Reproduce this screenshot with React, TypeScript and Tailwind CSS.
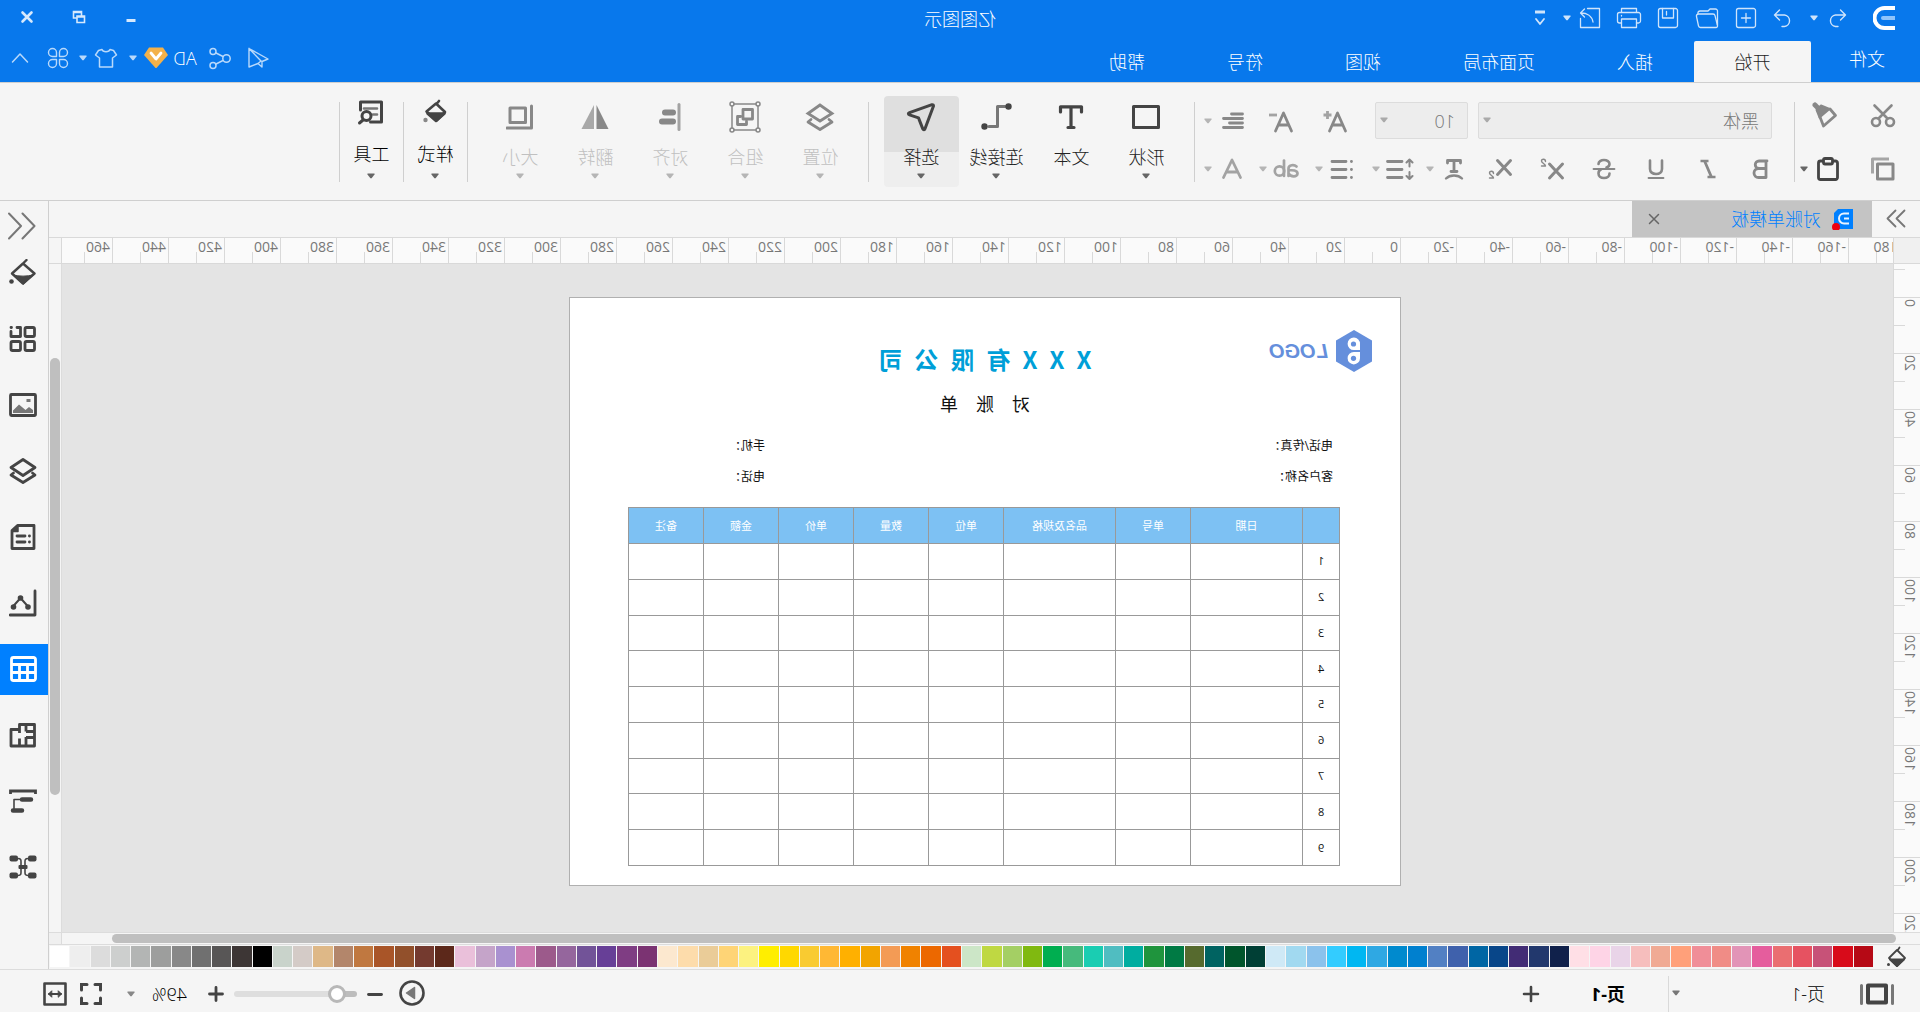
import React from "react";

type IconProps = { children: React.ReactNode; w?: number; h?: number; className?: string; sw?: number };

function Icon({ children, w = 28, h = 28, className = "", sw = 2 }: IconProps) {
  return (
    <svg
      width={w}
      height={h}
      viewBox={`0 0 ${w} ${h}`}
      fill="none"
      stroke="currentColor"
      strokeWidth={sw}
      strokeLinecap="round"
      strokeLinejoin="round"
      className={`shrink-0 ${className}`}
      aria-hidden="true"
    >
      {children}
    </svg>
  );
}

function Caret({ className = "" }: { className?: string }) {
  return (
    <svg width="8" height="6" viewBox="0 0 8 6" className={`shrink-0 ${className}`} aria-hidden="true">
      <path d="M0.5 0.5h7v1L4.6 5.2h-1.2L0.5 1.5z" fill="currentColor" />
    </svg>
  );
}

function IconButton({ label, className = "", children }: { label: string; className?: string; children: React.ReactNode }) {
  return (
    <button type="button" aria-label={label} className={`flex shrink-0 items-center justify-center ${className}`}>
      {children}
    </button>
  );
}

/* ---------- header ---------- */

const tabs = ["插入", "页面布局", "视图", "符号", "帮助"];

function Header() {
  return (
    <header className="h-[82px] shrink-0 bg-[#0878ec] text-white">
      <div className="grid h-[41px] grid-cols-[1fr_auto_1fr] items-center pb-1">
        <div className="flex items-center pb-px pl-[25px] text-[#cfe4fb]">
          <svg width="22" height="24" viewBox="0 0 22 24" fill="none" aria-label="logo">
            <path d="M0 2h10.500a10 10 0 0 1 0 20H0" stroke="#fff" strokeWidth="4" />
            <path d="M0 12h12" stroke="#8fc4fb" strokeWidth="4" strokeLinecap="round" />
          </svg>
          <IconButton label="撤销" className="ml-[19px] w-[34px]">
            <Icon w={20} h={20} sw={1.4}>
              <path d="M6.500 2L1.500 7l5 5M1.500 7h10a5.800 5.800 0 0 1 0 11.500H9" />
            </Icon>
          </IconButton>
          <IconButton label="撤销列表" className="w-3"><Caret /></IconButton>
          <IconButton label="重做" className="ml-2 w-[34px]">
            <Icon w={20} h={20} sw={1.4}>
              <path d="M13.500 2l5 5-5 5M18.500 7h-10a5.800 5.800 0 0 0 0 11.500H11" />
            </Icon>
          </IconButton>
          <div className="ml-[3px] flex items-center gap-[5px]">
            <IconButton label="新建" className="w-[34px]">
              <Icon w={22} h={22} sw={1.3}>
                <rect x="1.500" y="1.500" width="19" height="19" rx="2" />
                <path d="M11 6.500v9M6.500 11h9" />
              </Icon>
            </IconButton>
            <IconButton label="打开" className="w-[34px]">
              <Icon w={24} h={22} sw={1.3}>
                <path d="M1.500 18V4a2 2 0 0 1 2-2h5.500l2 2h8a2 2 0 0 1 2 2.500" />
                <path d="M3 20.500h15.500a2 2 0 0 0 2-1.600l2-9.400a2 2 0 0 0-2-2.500H6a2 2 0 0 0-2 1.600L1.500 18.500a1.600 1.600 0 0 0 1.500 2z" />
              </Icon>
            </IconButton>
            <IconButton label="保存" className="w-[34px]">
              <Icon w={22} h={22} sw={1.3}>
                <rect x="1.500" y="1.500" width="19" height="19" rx="2" />
                <path d="M5.500 1.500v9.500h11V1.500M12.500 4.500v3.500" />
              </Icon>
            </IconButton>
            <IconButton label="打印" className="w-[34px]">
              <Icon w={26} h={22} sw={1.3}>
                <path d="M5.500 5.500v-4h15v4M5.500 16h-2a2 2 0 0 1-2-2V7.500a2 2 0 0 1 2-2h19a2 2 0 0 1 2 2V14a2 2 0 0 1-2 2h-2" />
                <path d="M5.500 12h15v8.500h-15zM20.500 8.500v0.500" />
              </Icon>
            </IconButton>
            <IconButton label="导出" className="w-[34px]">
              <Icon w={22} h={22} sw={1.3}>
                <path d="M13.500 1.500h-12v19h19v-9" />
                <path d="M16.500 2l4 4-4 4M20 6c-6 0-11 3-12 9" />
              </Icon>
            </IconButton>
          </div>
          <IconButton label="导出列表" className="w-3"><Caret /></IconButton>
          <IconButton label="更多" className="ml-3 w-[18px]">
            <Icon w={12} h={16} sw={1.8}>
              <path d="M1 2h10" strokeWidth="3" strokeLinecap="butt" />
              <path d="M2 9l4 5 4-5" />
            </Icon>
          </IconButton>
        </div>
        <h1 className="text-lg leading-6">亿图图示</h1>
        <div className="flex items-center justify-end pb-[3px] pr-px text-[#d6e9fd]">
          <IconButton label="最小化" className="h-8 w-[52px]">
            <Icon w={14} h={14}><path d="M2.500 10.500h9" strokeWidth="3" strokeLinecap="butt" /></Icon>
          </IconButton>
          <IconButton label="还原" className="h-8 w-[52px]">
            <Icon w={14} h={14} sw={1.6}>
              <path d="M1.500 6h7.500v6.500H1.500zM4.500 5.500V1.500h8v6.500H9.500M4.500 2.500h8M1.500 7h7.500" strokeLinejoin="miter" />
            </Icon>
          </IconButton>
          <IconButton label="关闭" className="h-8 w-[52px]">
            <Icon w={14} h={14} sw={2.6}><path d="M2.500 2.500l9 9M11.500 2.500l-9 9" /></Icon>
          </IconButton>
        </div>
      </div>
      <div className="flex h-[41px] justify-between">
        <nav className="flex text-lg leading-6">
          <button type="button" className="w-[109px] pb-[6px] pr-[3px]">文件</button>
          <button type="button" className="w-[117px] rounded-t-xs bg-[#f5f5f5] text-[#222]">开始</button>
          {tabs.map((t) => (
            <button key={t} type="button" className="px-[41px]">{t}</button>
          ))}
        </nav>
        <div className="flex items-center pb-2 pr-2 text-[#b9d9fb]">
          <IconButton label="发送" className="w-6">
            <Icon w={24} h={24} sw={1.4}>
              <path d="M21 2.500L2 13l6 2.500M8 15.500V21l4-3.500M21 2.500v18.500l-9-3.500L9 15M21 2.500L9 15" />
            </Icon>
          </IconButton>
          <IconButton label="分享" className="ml-[14px] w-6">
            <Icon w={24} h={24} sw={1.5}>
              <circle cx="5.500" cy="12.500" r="3.700" />
              <circle cx="19" cy="5.500" r="3" />
              <circle cx="19" cy="19.500" r="3" />
              <path d="M9 10.500l7-3.500M9 14.500l7 3.500" />
            </Icon>
          </IconButton>
          <button type="button" className="ml-[10px] flex w-[26px] justify-center text-lg leading-6 text-white">AD</button>
          <IconButton label="会员" className="ml-1 w-6">
            <svg width="24" height="22" viewBox="0 0 24 22" aria-hidden="true">
              <path d="M5 0.500h14L24 8 12.500 21h-1L0 8z" fill="#f3b14a" />
              <path d="M7 6l5 6 5-6" fill="none" stroke="#fff" strokeWidth="2.800" strokeLinecap="round" strokeLinejoin="round" />
            </svg>
          </IconButton>
          <IconButton label="会员列表" className="ml-[6px] w-[10px]"><Caret /></IconButton>
          <IconButton label="皮肤" className="ml-[10px] w-6">
            <Icon w={24} h={24} sw={1.5}>
              <path d="M8 3.500c1 3 7 3 8 0l3.500 1L22.500 9l-4 3v9h-13v-9l-4-3 3-4.500z" />
            </Icon>
          </IconButton>
          <IconButton label="皮肤列表" className="ml-[6px] w-[10px]"><Caret /></IconButton>
          <IconButton label="应用" className="ml-2 w-6">
            <Icon w={24} h={24} sw={1.4}>
              <path d="M10.500 10.500H6.500a4 4 0 1 1 4-4zM13.500 10.500V6.500a4 4 0 1 1 4 4zM10.500 13.500V17.500a4 4 0 1 1-4-4zM13.500 13.500h4a4 4 0 1 1-4 4z" />
            </Icon>
          </IconButton>
          <IconButton label="收起" className="ml-[14px] w-6">
            <Icon w={18} h={12} sw={1.5}><path d="M1.500 10L9 2l7.500 8" /></Icon>
          </IconButton>
        </div>
      </div>
    </header>
  );
}

/* ---------- ribbon ---------- */

const Sep = ({ className = "" }: { className?: string }) => (
  <div className={`mt-[19px] h-20 w-px shrink-0 bg-[#cfcfcf] ${className}`} />
);

type ToolProps = { label: string; icon: React.ReactNode; disabled?: boolean; caret?: boolean; active?: boolean };

function Tool({ label, icon, disabled = false, caret = true, active }: ToolProps) {
  return (
    <button
      type="button"
      className={`mt-[13px] flex h-[91px] w-[75px] flex-col items-center rounded-sm ${
        disabled ? "text-[#c0c0c0]" : "text-[#222]"
      } ${active ? "bg-[linear-gradient(#dfdfdf_56px,#eeeeee_56px)]" : ""}`}
    >
      <span className={`flex h-[42px] items-center ${disabled ? "text-[#888]" : "text-[#444]"}`}>{icon}</span>
      <span className="mt-[7px] text-lg leading-6">{label}</span>
      {caret && <Caret className={`mt-1 ${disabled ? "text-[#b5b5b5]" : "text-[#666]"}`} />}
    </button>
  );
}

function SideTool({ label, icon }: { label: string; icon: React.ReactNode }) {
  return (
    <button type="button" className="mt-[13px] flex h-[91px] w-[63px] flex-col items-center text-black">
      <span className="flex h-8 items-center text-[#444]">{icon}</span>
      <span className="mt-[14px] text-lg leading-6">{label}</span>
      <Caret className="mt-[7px] text-[#666]" />
    </button>
  );
}

function Ribbon() {
  return (
    <section className="flex h-[119px] shrink-0 border-y border-[#cfcfcf] text-[#888]">
      <div className="flex w-[125px] flex-col gap-6 pl-[22px] pt-[17px]">
        <div className="flex">
          <IconButton label="剪切" className="h-[30px] w-[30px]">
            <Icon w={26} h={26} sw={2.6}>
              <circle cx="6" cy="20" r="4" />
              <circle cx="20" cy="20" r="4" />
              <path d="M8.500 16.500L21.500 3.500M17.500 16.500L4.500 3.500" />
            </Icon>
          </IconButton>
          <IconButton label="格式刷" className="ml-[28px] h-[30px] w-[30px]">
            <Icon w={26} h={26} sw={2.8}>
              <path d="M8 7L2.500 13.500 14.500 24 18 15" />
              <path d="M8.500 7l10 8.500L21.500 8 17 3.500z" fill="currentColor" strokeWidth="2" />
              <path d="M20.500 5.500l2.500-2.500" strokeWidth="5" />
            </Icon>
          </IconButton>
        </div>
        <div className="flex">
          <IconButton label="复制" className="h-[30px] w-[30px]">
            <Icon w={26} h={26} sw={3}>
              <path d="M3 8h15.500v15H3z" />
              <path d="M7 3h16.500v14.500" stroke="#a5a5a5" strokeLinecap="butt" />
            </Icon>
          </IconButton>
          <IconButton label="粘贴" className="ml-[25px] h-[30px] w-[30px] text-[#444]">
            <Icon w={24} h={26} sw={2.8}>
              <rect x="2.500" y="5" width="19" height="18.500" rx="2" />
              <rect x="7.500" y="2.500" width="9" height="5.500" rx="1.500" fill="#f5f5f5" />
            </Icon>
          </IconButton>
          <IconButton label="粘贴选项" className="ml-1 w-[10px] text-[#666]"><Caret /></IconButton>
        </div>
      </div>
      <Sep />
      <div className="ml-[22px] w-[577px] pt-[19px]">
        <div className="flex h-[37px] items-center">
          <div className="relative w-[294px]">
            <select aria-label="字体" className="h-[37px] w-full appearance-none rounded-xs border border-[#dcdcdc] bg-[#ededed] pl-3 text-lg text-[#777]">
              <option>黑体</option>
            </select>
            <Caret className="pointer-events-none absolute right-[5px] top-[15px] text-[#aaa]" />
          </div>
          <div className="relative ml-[10px] w-[93px]">
            <select aria-label="字号" className="h-[37px] w-full appearance-none rounded-xs border border-[#dcdcdc] bg-[#ededed] pl-3 text-lg text-[#777]">
              <option>10</option>
            </select>
            <Caret className="pointer-events-none absolute right-[5px] top-[15px] text-[#aaa]" />
          </div>
          <IconButton label="增大字号" className="ml-[23px] h-[30px] w-[34px]">
            <Icon w={26} h={24} sw={2.8}>
              <path d="M2.500 22L10.500 4l8 18M5.500 16h10" />
              <path d="M20.500 2v8M16.500 6h8" stroke="#a3a3a3" strokeLinecap="butt" />
            </Icon>
          </IconButton>
          <IconButton label="减小字号" className="ml-5 h-[30px] w-[34px]">
            <Icon w={26} h={24} sw={2.8}>
              <path d="M2.500 22L10.500 4l8 18M5.500 16h10" />
              <path d="M17 6h8" stroke="#a3a3a3" strokeLinecap="butt" />
            </Icon>
          </IconButton>
          <IconButton label="对齐方式" className="ml-4 h-[30px] w-[30px]">
            <Icon w={24} h={20} sw={2.8}>
              <path d="M2.500 3h11M2.500 7.500h19M2.500 12h13M2.500 16.500h19" />
            </Icon>
          </IconButton>
          <IconButton label="对齐列表" className="ml-[3px] w-[14px] text-[#b5b5b5]"><Caret /></IconButton>
        </div>
        <div className="mt-[15px] flex items-center">
          <div className="-ml-[3px] flex gap-[22px]">
            <IconButton label="加粗" className="h-[30px] w-[30px]">
              <Icon w={18} h={22} sw={2.8}>
                <path d="M3 3v16.500h7.500a4.500 4.500 0 0 0 0-9H3.500M10 10.500a3.700 3.700 0 0 0 0-7.500H2" />
              </Icon>
            </IconButton>
            <IconButton label="斜体" className="h-[30px] w-[30px]">
              <Icon w={18} h={22} sw={2.8}>
                <path d="M8.500 3h8M1.500 19h8" strokeWidth="2.400" strokeLinecap="butt" />
                <path d="M12 4L6 18" />
              </Icon>
            </IconButton>
            <IconButton label="下划线" className="h-[30px] w-[30px]">
              <Icon w={18} h={22} sw={2.6}>
                <path d="M3 2.500v8.500c0 3 2.500 5 6 5s6-2 6-5V2.500" />
                <path d="M1.500 20h15" strokeWidth="1.800" />
              </Icon>
            </IconButton>
            <IconButton label="删除线" className="h-[30px] w-[30px]">
              <Icon w={24} h={22} sw={2.6}>
                <path d="M17.500 6c0-2.500-2.500-4-5.500-4S6.500 3.500 6.500 6c0 2 1.500 3 3 3.500M6.500 15.500c0 2.500 2 4.500 5.500 4.500s5.500-2 5.500-4.500-1-3.500-2.500-4" />
                <path d="M1.500 11h21" strokeWidth="1.800" />
              </Icon>
            </IconButton>
            <IconButton label="上标" className="h-[30px] w-[30px]">
              <Icon w={26} h={24} sw={3}>
                <path d="M2.500 7l13 14M15.500 7l-13 14" />
                <path d="M19.500 4.500c0-3 4-3 4-0.500 0 2-4 3-4 5h4" strokeWidth="1.400" />
              </Icon>
            </IconButton>
            <IconButton label="下标" className="h-[30px] w-[30px]">
              <Icon w={26} h={24} sw={3}>
                <path d="M2.500 3.500l13 14M15.500 3.500l-13 14" />
                <path d="M19.500 16.500c0-3 4-3 4-0.500 0 2-4 3-4 5h4" strokeWidth="1.400" />
              </Icon>
            </IconButton>
          </div>
          <IconButton label="文字方向" className="ml-4 h-[30px] w-[30px]">
            <Icon w={20} h={24} sw={2.8}>
              <path d="M3.500 6V3.500h13V6M10 4v10.500M7 14.500h6" />
              <path d="M2 21.500c4-4 12-4 16 0" strokeWidth="2.400" />
            </Icon>
          </IconButton>
          <IconButton label="文字方向列表" className="ml-[2px] w-[14px] text-[#b5b5b5]"><Caret /></IconButton>
          <IconButton label="行距" className="ml-2 h-[30px] w-[30px]">
            <Icon w={30} h={22} sw={2.8}>
              <path d="M13 3.500h14.500M13 11.500h14.500M13 19.500h14.500" />
              <path d="M5.500 1.500v7M2.500 4.500l3-3 3 3M5.500 21v-7M2.500 18l3 3 3-3" strokeWidth="2" />
            </Icon>
          </IconButton>
          <IconButton label="行距列表" className="ml-[2px] w-[14px] text-[#b5b5b5]"><Caret /></IconButton>
          <IconButton label="项目符号" className="ml-3 h-[30px] w-[30px]">
            <Icon w={26} h={22} sw={2.8}>
              <path d="M9 3.500h14M9 11.500h14M9 19.500h14M3.500 3.500h0.100M3.500 11.500h0.100M3.500 19.500h0.100" />
            </Icon>
          </IconButton>
          <IconButton label="项目符号列表" className="ml-px w-[14px] text-[#b5b5b5]"><Caret /></IconButton>
          <IconButton label="突出显示" className="ml-[11px] h-[30px] w-[30px] text-[#a3a3a3]">
            <Icon w={28} h={22} sw={2.7}>
              <path d="M3.500 8.500c2-2 8-2 8 2V18M11.500 12c-4 0-9 0-9 3.500 0 4 7 3.500 9 0" />
              <path d="M16 2.500V18" />
              <circle cx="20.500" cy="13" r="4.700" />
            </Icon>
          </IconButton>
          <IconButton label="突出显示列表" className="ml-px w-[14px] text-[#b5b5b5]"><Caret /></IconButton>
          <IconButton label="字体颜色" className="ml-[9px] h-[30px] w-[30px] text-[#a3a3a3]">
            <Icon w={22} h={22} sw={2.8}>
              <path d="M2.500 19.500L11 2l8.500 17.500M5.500 14h11" />
            </Icon>
          </IconButton>
          <IconButton label="字体颜色列表" className="ml-[2px] w-[14px] text-[#b5b5b5]"><Caret /></IconButton>
        </div>
      </div>
      <Sep />
      <div className="ml-[10px] flex">
        <Tool label="形状" icon={<Icon w={30} h={28} sw={3}><path d="M2.500 3.500h25v21h-25z" /></Icon>} />
        <Tool
          label="文本"
          caret={false}
          icon={<Icon w={28} h={28} sw={3.2}><path d="M3.500 9V3.800h21V9M14 4v20.500M11 24.500h6" /></Icon>}
        />
        <Tool
          label="连接线"
          icon={
            <Icon w={32} h={28}>
              <path d="M7 3.500h7.500v20H23" stroke="#777" strokeWidth="3" />
              <circle cx="3.500" cy="3.500" r="3.200" fill="currentColor" stroke="none" />
              <circle cx="27.500" cy="23.500" r="3.200" fill="currentColor" stroke="none" />
            </Icon>
          }
        />
        <Tool
          label="选择"
          active
          icon={
            <Icon w={30} h={30} sw={3}>
              <path d="M2.500 4c0-1 0.500-1.500 1.500-1.300l22.500 8c1.500 0.600 1.500 1.700 0 2.200l-9 3-4.300 11c-0.600 1.300-1.700 1.200-2.200-0.200z" />
            </Icon>
          }
        />
      </div>
      <Sep className="ml-[15px]" />
      <div className="ml-[10px] flex">
        <Tool
          label="位置"
          disabled
          icon={
            <Icon w={30} h={30} sw={2.8}>
              <path d="M15 3l12 8.500L15 19 3 11.500z" strokeLinejoin="miter" />
              <path d="M6 17.500l-3 2.500 12 7.500L27 20l-3-2.500" />
            </Icon>
          }
        />
        <Tool
          label="组合"
          disabled
          icon={
            <Icon w={32} h={32} sw={1.5}>
              <path d="M5 3h22M5 29h22M3 5v22M29 5v22" />
              <circle cx="3" cy="3" r="2" />
              <circle cx="29" cy="3" r="2" />
              <circle cx="3" cy="29" r="2" />
              <circle cx="29" cy="29" r="2" />
              <path d="M8.500 8.500h9.500v9.500H8.500zM20.500 15.500h3v8h-9v-3" strokeWidth="2.800" />
            </Icon>
          }
        />
        <Tool
          label="对齐"
          disabled
          icon={
            <Icon w={30} h={30} sw={3}>
              <path d="M6 2.500v25" stroke="#a3a3a3" />
              <path d="M12 10.500h8M12 19.500h11" strokeWidth="6" />
            </Icon>
          }
        />
        <Tool
          label="翻转"
          disabled
          icon={
            <Icon w={30} h={28} className="stroke-none">
              <path d="M13.500 2v24H1.500z" fill="#888" />
              <path d="M16 2v24h12.500z" fill="#a8a8a8" />
            </Icon>
          }
        />
        <Tool
          label="大小"
          disabled
          icon={
            <Icon w={28} h={28} sw={3}>
              <path d="M8.500 5h15.500v14.500H8.500z" />
              <path d="M2.500 3v22H27" />
            </Icon>
          }
        />
      </div>
      <Sep className="ml-[15px]" />
      <SideTool
        label="样式"
        icon={
          <Icon w={26} h={26} sw={2.6}>
            <path d="M9 2l2.500 3M12 4.500L3 13l8.500 8.500L21.500 12.500z" />
            <path d="M3.500 14.500h17L12 22z" fill="currentColor" />
            <circle cx="22.500" cy="21" r="2.200" fill="#888" stroke="none" />
          </Icon>
        }
      />
      <Sep />
      <SideTool
        label="工具"
        icon={
          <Icon w={28} h={28} sw={3}>
            <path d="M24.500 12V4h-21v20h11" />
            <path d="M8 10.500h13M8 16.500h4" stroke="#777" strokeWidth="2.600" />
            <circle cx="18.500" cy="18" r="4.500" />
            <path d="M22 22l3.500 3" />
          </Icon>
        }
      />
      <Sep />
    </section>
  );
}

/* ---------- workspace ---------- */

const hTicks = Array.from({ length: 33 }, (_, i) => -180 + i * 20);
const vTicks = Array.from({ length: 13 }, (_, i) => -20 + i * 20);

function HorizontalRuler() {
  return (
    <div className="flex h-[27px] border-y border-[#d9d9d9]">
      <div className="w-[27px] shrink-0 border-r border-[#d9d9d9] bg-[#f0f0f0]" />
      <div className="flex min-w-0 flex-1 overflow-x-clip bg-[#fafafa] text-sm font-normal leading-[14px] text-[#777]">
        {hTicks.map((n, i) => (
          <div key={n} className={`flex w-14 shrink-0 flex-col justify-between border-l border-[#d9d9d9] pt-[2px] ${i === 0 ? "-ml-3" : ""}`}>
            <span className="h-3 pl-[2px]">{n}</span>
            <span className="ml-[27px] h-[11px] w-px bg-[#d9d9d9]" />
          </div>
        ))}
      </div>
      <div className="w-[13px] shrink-0 border-l border-[#d9d9d9]" />
    </div>
  );
}

function VerticalRuler() {
  return (
    <div className="w-[27px] shrink-0 overflow-y-clip border-r border-[#d9d9d9] bg-[#fafafa] text-sm font-normal leading-[14px] text-[#777]">
      {vTicks.map((n, i) => (
        <div key={n} className={`flex h-14 justify-between border-t border-[#d9d9d9] ${i === 0 ? "-mt-[23px]" : ""}`}>
          <span className="flex w-[14px] pl-[3px] pt-px">
            {i > 0 && <span className="h-max rotate-180 [writing-mode:vertical-rl]">{n}</span>}
          </span>
          <span className="mt-[27px] h-px w-[11px] bg-[#d9d9d9]" />
        </div>
      ))}
    </div>
  );
}

const columns = [
  { name: "", w: "w-[37px]" },
  { name: "日期", w: "w-[112px]" },
  { name: "单号", w: "w-[75px]" },
  { name: "品名及规格", w: "w-[112px]" },
  { name: "单位", w: "w-[75px]" },
  { name: "数量", w: "w-[75px]" },
  { name: "单价", w: "w-[75px]" },
  { name: "金额", w: "w-[75px]" },
  { name: "备注", w: "w-[75px]" },
];

function Sheet() {
  return (
    <article className="ml-[492px] mt-[33px] h-[589px] w-[832px] shrink-0 border border-[#b0b0b0] bg-white font-normal text-[#111]">
      <div className="flex items-center gap-2 pl-[28px] pt-8 text-[#658fdc]">
        <svg width="36" height="42" viewBox="0 0 36 42" className="shrink-0" aria-hidden="true">
          <path d="M18 0l18 10.500v21L18 42 0 31.500v-21z" fill="currentColor" />
          <path d="M12 20V14a6.200 6.200 0 1 1 6.200 6zM12 22h6.200a6.200 6.200 0 1 1-6.200 6.200z" fill="#fff" />
          <circle cx="18.500" cy="14" r="2.600" fill="currentColor" />
          <circle cx="18.500" cy="28.300" r="2.600" fill="currentColor" />
        </svg>
        <span className="font-['Liberation_Sans',sans-serif] text-xl font-bold italic leading-5">LOGO</span>
      </div>
      <h2 className="-mt-[29px] text-center font-['Noto_Sans_CJK_SC',sans-serif] text-2xl font-bold leading-8 text-[#009fd8]">
        {"X\u2002X\u2002X\u2002有\u2002限\u2002公\u2002司"}
      </h2>
      <h3 className="mt-[17px] text-center text-lg leading-6">{"对\u2003账\u2003单"}</h3>
      <div className="mt-5 grid grid-cols-[568px_1fr] gap-y-[11px] pl-[67px] text-xs leading-5">
        <span>电话/传真：</span>
        <span>手机：</span>
        <span>客户名称：</span>
        <span>电话：</span>
      </div>
      <table className="ml-[60px] mt-5 h-[359px] w-[710px] table-fixed border-collapse text-center text-[11px] leading-4">
        <thead>
          <tr className="h-9 bg-[#7dc1f3] text-white">
            {columns.map((c) => (
              <th key={c.name || "no"} className={`${c.w} border border-[#999] p-0 font-normal`}>{c.name}</th>
            ))}
          </tr>
        </thead>
        <tbody>
          {Array.from({ length: 9 }, (_, r) => (
            <tr key={r} className="h-[35px]">
              {columns.map((c, i) => (
                <td key={i} className="border border-[#999] p-0">{i === 0 ? r + 1 : ""}</td>
              ))}
            </tr>
          ))}
        </tbody>
      </table>
    </article>
  );
}

const swatches = [
  "#b60915", "#d80b1a", "#c75278", "#e65261", "#ea6e71", "#e55d9d", "#e294b7", "#f08c86", "#f08e98", "#ffa07a",
  "#f0aa94", "#f6bebd", "#e9d4e8", "#fed4e6", "#ffdfe6", "#10214b", "#22386d", "#422c75", "#084689", "#0066a4",
  "#3f61ac", "#5280c3", "#0080cf", "#008ace", "#2fa8e3", "#00b7f2", "#33ccff", "#8bc2ec", "#a1d9f0", "#cfe9f6",
  "#003f35", "#00552c", "#006361", "#566a2e", "#007a44", "#1f943d", "#00ada0", "#50bdc1", "#1acdb2", "#46ba7c",
  "#00ae50", "#80b910", "#a4cf64", "#bfd842", "#cce6c7", "#e4501f", "#ec6800", "#f08200", "#f39b55", "#f2a400",
  "#ffb000", "#ffb834", "#f9cb31", "#ffd800", "#ffee00", "#fcf280", "#fed476", "#eacc98", "#fddcab", "#fce8cf",
  "#7b3372", "#7f3d83", "#673f97", "#725398", "#95669d", "#9c5a8b", "#cb7bb0", "#a991d0", "#c5a4c9", "#eac0da",
  "#5c281a", "#743a2f", "#92502b", "#a95528", "#c07840", "#b3866b", "#deb887", "#d4cbc7", "#c9d3cb", "#000000",
  "#3d3635", "#585656", "#707070", "#888888", "#9d9e9d", "#b3b5b4", "#cdcfce", "#dcdcdc", "#eeeeee", "#ffffff",
];

function Workspace() {
  return (
    <main className="flex min-w-0 flex-1 flex-col">
      <div className="flex h-9 shrink-0 items-center">
        <IconButton label="展开标签" className="w-12 text-[#777]">
          <Icon w={22} h={20} sw={1.8}><path d="M2.500 1.500l8 8-8 8M11.500 1.500l8 8-8 8" /></Icon>
        </IconButton>
        <div className="flex h-full w-60 items-center bg-[#c4c4c4] pl-[18px] text-[#0080ff]">
          <svg width="22" height="22" viewBox="0 0 22 22" aria-hidden="true">
            <path d="M1 1h15l4 4v15a1 1 0 0 1-1 1H1z" fill="#0080ff" />
            <path d="M5 5.500h5a5 5 0 0 1 0 10H5M5 10.500h5" fill="none" stroke="#e8f2ff" strokeWidth="2" />
            <circle cx="18" cy="19" r="4" fill="#f00010" />
          </svg>
          <span className="ml-[11px] text-lg leading-6">对账单模板</span>
          <IconButton label="关闭标签" className="ml-auto mr-[10px] h-6 w-6 text-[#666]">
            <Icon w={12} h={12} sw={1.5}><path d="M1.500 1.500l9 9M10.500 1.500l-9 9" /></Icon>
          </IconButton>
        </div>
      </div>
      <HorizontalRuler />
      <div className="flex min-h-0 flex-1">
        <VerticalRuler />
        <div className="min-w-0 flex-1 overflow-hidden bg-[#e4e4e4]"><Sheet /></div>
        <div className="w-[13px] shrink-0 border-l border-[#dcdcdc] px-px pt-[94px]">
          <div className="h-[437px] rounded-full bg-[#bfbfbf]" />
        </div>
      </div>
      <div className="flex h-[13px] shrink-0 border-y border-[#dcdcdc]">
        <div className="flex-1 border-r border-[#dcdcdc] pl-6 pr-[50px] pt-px">
          <div className="h-[9px] rounded-full bg-[#bfbfbf]" />
        </div>
        <div className="w-3 shrink-0 bg-[#f0f0f0]" />
      </div>
      <div className="flex h-6 shrink-0 items-center pb-px pr-px">
        <IconButton label="填充颜色" className="w-[47px] pr-[2px] text-[#444]">
          <Icon w={22} h={22} sw={1.8}>
            <path d="M8.500 1.500l2 3M11 4L3 12l8 8 8-8z" />
            <path d="M4 13.500h14L11 20z" fill="currentColor" />
            <circle cx="19.500" cy="18.500" r="1.500" fill="currentColor" stroke="none" />
          </Icon>
        </IconButton>
        <div className="grid h-[21px] flex-1 auto-cols-fr grid-flow-col gap-px">
          {swatches.map((c) => (
            <button key={c} type="button" aria-label={c} style={{ backgroundColor: c }} />
          ))}
        </div>
      </div>
    </main>
  );
}

/* ---------- side bar ---------- */

const sideItems: { label: string; icon: React.ReactNode }[] = [
  {
    label: "填充",
    icon: (
      <>
        <path d="M10.500 1l3.500 3.500L2.500 14.500 14 24.500l11-10L14 4.500" strokeWidth="2.400" />
        <path d="M4 16c6 1.500 14 1.500 20 0l-10 9z" fill="currentColor" strokeWidth="1" />
        <circle cx="25.500" cy="22.500" r="2.300" fill="currentColor" stroke="none" />
      </>
    ),
  },
  {
    label: "符号库",
    icon: (
      <>
        <rect x="2.500" y="2.500" width="9.500" height="9" rx="1.500" />
        <rect x="2.500" y="16.500" width="9.500" height="9" rx="1.500" />
        <rect x="16.500" y="16.500" width="9.500" height="9" rx="1.500" />
        <path d="M20 2.500h-3.500v9H26V6.500M25.500 2.500h0.500" />
      </>
    ),
  },
  {
    label: "图片",
    icon: (
      <>
        <rect x="1.500" y="3.500" width="25" height="21" rx="1" />
        <path d="M4 22v-3l4-3 3.500 3L18 13.500l6 6V22z" fill="#777" stroke="none" />
        <rect x="6.500" y="8" width="4" height="3" fill="#777" stroke="none" />
      </>
    ),
  },
  {
    label: "图层",
    icon: (
      <>
        <path d="M14 2.500L26 10.500 14 18.500 2 10.500z" />
        <path d="M4.500 16L2 18l12 7.500L26 18l-2.500-2" />
      </>
    ),
  },
  {
    label: "页面",
    icon: (
      <>
        <path d="M3 2.500h16.500l5.500 5v18H3z" />
        <path d="M19 3v5.500h5.500z" fill="currentColor" strokeWidth="1.500" />
        <path d="M12 13h8M12 19h8M7.500 13h0.100M7.500 19h0.100" />
      </>
    ),
  },
  {
    label: "图表",
    icon: (
      <>
        <path d="M2 2v24h25" />
        <path d="M9 17.500L16.500 9 24 17.500" strokeWidth="2" />
        <circle cx="9" cy="18" r="2.800" fill="currentColor" stroke="none" />
        <circle cx="16.500" cy="9" r="2.800" fill="currentColor" stroke="none" />
        <circle cx="23.500" cy="18" r="2.800" fill="currentColor" stroke="none" />
      </>
    ),
  },
  {
    label: "表格",
    icon: (
      <>
        <rect x="1.500" y="2.500" width="24" height="23" rx="2" />
        <path d="M2 9.500h23M2 17.500h23M9.500 10v15M17.500 10v15" strokeLinecap="butt" />
      </>
    ),
  },
  {
    label: "平面图",
    icon: (
      <path
        d="M17.500 12V3.500h-15v21.500h23.500V8.500h-8M11 3.500v7M2.500 10.500h8.500M2.500 16.500h8.500M11 16v9M17.500 17.500v7.500"
        strokeLinecap="butt"
      />
    ),
  },
  {
    label: "甘特图",
    icon: (
      <>
        <path d="M1.500 7V4h25v3" strokeLinecap="butt" strokeLinejoin="miter" />
        <path d="M6 12.500h9M15 23.500h9" strokeWidth="4.500" />
        <path d="M15 12.500h8v9" strokeWidth="1.600" />
      </>
    ),
  },
  {
    label: "思维导图",
    icon: (
      <>
        <g fill="currentColor" stroke="none">
          <rect x="0.500" y="2.500" width="8.500" height="6" rx="2" />
          <rect x="0.500" y="19.500" width="8.500" height="6" rx="2" />
          <rect x="19" y="2.500" width="8.500" height="6" rx="2" />
          <rect x="19" y="19.500" width="8.500" height="6" rx="2" />
          <rect x="9.500" y="12" width="9" height="4" rx="1" />
        </g>
        <path d="M9 5.500c3.500 0 3 2 3 4.500v8c0 2.500 0.500 4.500-3 4.500M19 5.500c-3.500 0-3 2-3 4.500v8c0 2.500-0.500 4.500 3 4.500" strokeWidth="1.600" />
      </>
    ),
  },
];

function SideBar() {
  return (
    <aside className="flex w-[49px] shrink-0 flex-col border-l border-[#cfcfcf]">
      <IconButton label="展开面板" className="h-[47px] w-full pl-1 pt-[2px] text-[#777]">
        <Icon w={28} h={28} sw={2}><path d="M13.500 1.500L1.500 14l12 12.500M27 1.500L15 14l12 12.500" /></Icon>
      </IconButton>
      <div className="flex flex-col gap-[15px]">
        {sideItems.map((s) => (
          <IconButton
            key={s.label}
            label={s.label}
            className={`h-[51px] w-full pb-[2px] pl-px ${s.label === "表格" ? "bg-[#0080ff] text-white" : "text-[#444]"}`}
          >
            <Icon sw={2.8}>{s.icon}</Icon>
          </IconButton>
        ))}
      </div>
    </aside>
  );
}

/* ---------- status bar ---------- */

function StatusBar() {
  return (
    <footer className="flex h-[43px] shrink-0 items-center justify-between border-t border-[#dcdcdc] pl-[25px] pr-[43px] pt-[5px] font-normal text-[#444]">
      <div className="flex items-center">
        <IconButton label="页面列表" className="w-9">
          <Icon w={36} h={24} sw={3}>
            <path d="M9 3.500h18v17H9z" strokeWidth="4" />
            <path d="M2.500 3.500v18M33.500 3.500v18" stroke="#777" />
          </Icon>
        </IconButton>
        <div className="relative ml-[30px] w-[160px]">
          <select aria-label="当前页" className="h-8 w-full appearance-none bg-transparent pl-1 text-lg font-light text-black">
            <option>页-1</option>
          </select>
          <Caret className="pointer-events-none absolute right-[3px] top-[12px] text-[#777]" />
        </div>
        <div className="h-[36px] w-px bg-[#d9d9d9]" />
        <button type="button" className="ml-[43px] text-lg font-bold leading-6 text-black">页-1</button>
        <IconButton label="添加页面" className="ml-[51px] w-[18px]">
          <Icon w={18} h={18} sw={2.6}><path d="M9 2v14M2 9h14" /></Icon>
        </IconButton>
      </div>
      <div className="flex items-center">
        <IconButton label="播放" className="w-[26px] pb-px">
          <Icon w={26} h={26} sw={2.6}>
            <circle cx="13" cy="13" r="11.500" />
            <path d="M10.500 7.500v11l8-5.500z" fill="#777" stroke="#777" strokeWidth="1.500" />
          </Icon>
        </IconButton>
        <IconButton label="缩小" className="ml-[15px] h-6 w-[18px]">
          <Icon w={18} h={18} sw={2.8}><path d="M2.500 9.500h13" /></Icon>
        </IconButton>
        <input
          type="range"
          aria-label="缩放"
          min={0}
          max={100}
          defaultValue={10}
          className="mx-[9px] h-[6px] w-[123px] appearance-none rounded-full bg-[linear-gradient(to_right,#bdbdbd_16%,#dedede_16%)] [&::-webkit-slider-thumb]:h-[18px] [&::-webkit-slider-thumb]:w-[18px] [&::-webkit-slider-thumb]:appearance-none [&::-webkit-slider-thumb]:rounded-full [&::-webkit-slider-thumb]:border-[3px] [&::-webkit-slider-thumb]:border-[#b8b8b8] [&::-webkit-slider-thumb]:bg-white"
        />
        <IconButton label="放大" className="h-6 w-[18px]">
          <Icon w={18} h={18} sw={2.8}><path d="M9 2.500v13M2.500 9h13" /></Icon>
        </IconButton>
        <div className="relative ml-5 w-[60px]">
          <select aria-label="缩放比例" className="h-8 w-full appearance-none bg-transparent text-lg font-light text-black">
            <option>49%</option>
          </select>
          <Caret className="pointer-events-none absolute right-0 top-[13px] text-[#888]" />
        </div>
        <IconButton label="全屏" className="ml-6 w-6">
          <Icon w={24} h={24} sw={3}>
            <path d="M2.500 8V2.500H8M16 2.500h5.500V8M21.500 16v5.500H16M8 21.500H2.500V16" strokeLinejoin="miter" />
          </Icon>
        </IconButton>
        <IconButton label="适应宽度" className="ml-3 w-6">
          <Icon w={24} h={24} sw={2.6}>
            <path d="M1.500 1.500h21v21h-21z" />
            <path d="M6 12h12" strokeWidth="2" />
            <path d="M8.500 9L5.500 12l3 3zM15.500 9l3 3-3 3z" fill="currentColor" strokeWidth="1" />
          </Icon>
        </IconButton>
      </div>
    </footer>
  );
}

export default function App() {
  return (
    <div className="flex h-screen -scale-x-100 flex-col overflow-hidden bg-[#f5f5f5] font-['Open_Sans','Noto_Sans_CJK_SC',sans-serif] font-light">
      <Header />
      <Ribbon />
      <div className="flex min-h-0 flex-1">
        <Workspace />
        <SideBar />
      </div>
      <StatusBar />
    </div>
  );
}
